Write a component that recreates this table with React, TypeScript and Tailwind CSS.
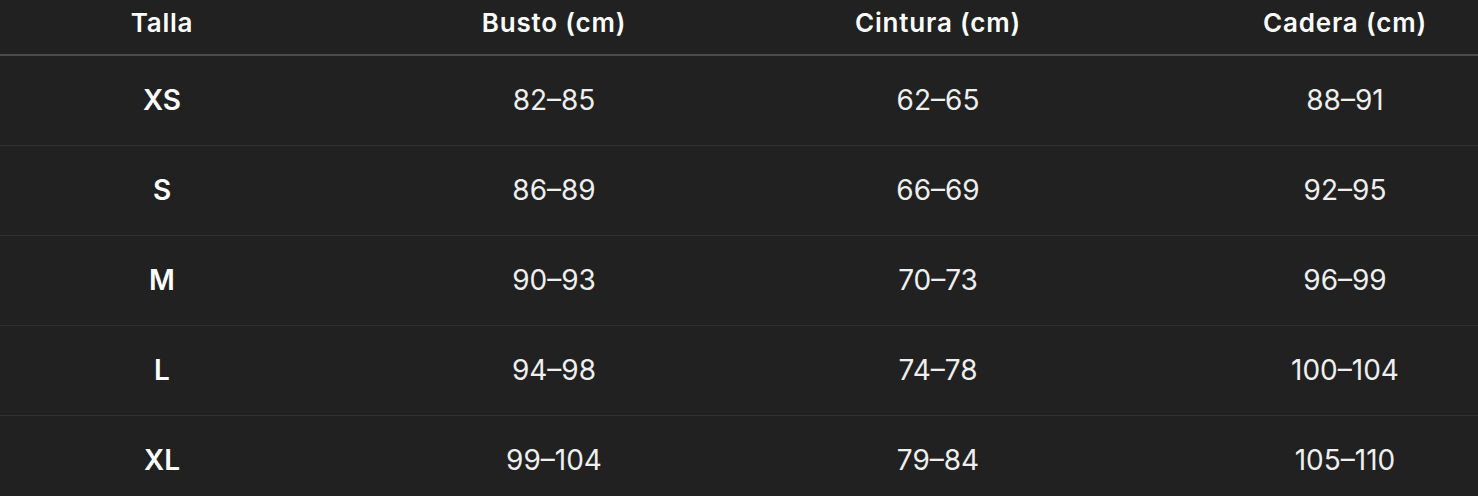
import React from "react";

const rows = [
  ["XS", "82–85", "62–65", "88–91"],
  ["S", "86–89", "66–69", "92–95"],
  ["M", "90–93", "70–73", "96–99"],
  ["L", "94–98", "74–78", "100–104"],
  ["XL", "99–104", "79–84", "105–110"],
];

export default function App() {
  return (
    <div
      className="w-[1478px] h-[496px] overflow-hidden bg-[#212121] text-white"
      style={{ fontFamily: "Inter, 'Noto Sans', sans-serif" }}
    >
      <table className="w-[1598px] table-fixed border-collapse">
        <colgroup>
          <col className="w-[324px]" />
          <col className="w-[460px]" />
          <col className="w-[308px]" />
          <col className="w-[506px]" />
        </colgroup>
        <thead>
          <tr className="border-b-2 border-[#4a4a4a]">
            {["Talla", "Busto (cm)", "Cintura (cm)", "Cadera (cm)"].map((h) => (
              <th
                key={h}
                className="h-[55px] pb-[10px] text-center align-middle text-[26px] leading-[31px] tracking-[0.8px] font-semibold text-white"
              >
                {h}
              </th>
            ))}
          </tr>
        </thead>
        <tbody>
          {rows.map((r, i) => (
            <tr key={i} className="border-b border-[#303030]">
              {r.map((c, j) => (
                <td
                  key={j}
                  className={`h-[90px] text-center align-middle text-[28px] leading-[34px] ${
                    j === 0 ? "font-semibold text-white" : "font-normal text-[#efefef]"
                  }`}
                >
                  {c}
                </td>
              ))}
            </tr>
          ))}
        </tbody>
      </table>
    </div>
  );
}
